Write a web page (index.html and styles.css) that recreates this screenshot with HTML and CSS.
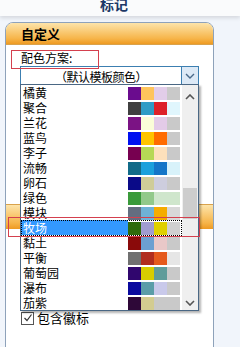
FILE: index.html
```html
<!DOCTYPE html>
<html lang="zh-CN">
<head>
    <meta charset="UTF-8">
    <title>标记</title>
    <link rel="stylesheet" href="styles.css">
</head>
<body>
    <div class="top">
        <h1 class="title">标记</h1>
    </div>

    <div class="panel">
        <div class="panelHead">自定义</div>
        <div class="panelBody">
            <div class="label">配色方案:</div>
            <div class="select">
                <span class="selectText">（默认模板颜色）</span>
                <span class="selectBtn">
                    <svg width="10" height="6" viewBox="0 0 10 6"><path d="M1 1 L5 5 L9 1" fill="none" stroke="#4a6a8a" stroke-width="1.4"/></svg>
                </span>
            </div>
            <div class="gap"></div>
            <div class="subHead"></div>
            <div class="gap2"></div>
            <label class="check">
                <span class="box">
                    <svg width="10" height="10" viewBox="0 0 10 10"><path d="M1.5 5 L4 7.5 L8.5 1.5" fill="none" stroke="#333" stroke-width="1.2"/></svg>
                </span>
                包含徽标
            </label>
        </div>

        <div class="mark markLabel"></div>

        <div class="dropList">
            <ul class="options" id="options"></ul>
            <div class="scroll">
                <svg class="arrowUp" width="10" height="6" viewBox="0 0 10 6"><path d="M1 5 L5 1 L9 5" fill="none" stroke="#555" stroke-width="1.6"/></svg>
                <div class="thumb"></div>
                <svg class="arrowDown" width="10" height="6" viewBox="0 0 10 6"><path d="M1 1 L5 5 L9 1" fill="none" stroke="#555" stroke-width="1.6"/></svg>
            </div>
        </div>

        <div class="mark markRow"></div>
    </div>

    <script>
        const schemes = [
            ['橘黄', ['#6a0c8e', '#fec45c', '#e2cde9', '#c9c9c9']],
            ['聚合', ['#404040', '#2f9cc6', '#dd2129', '#e0f6fd']],
            ['兰花', ['#7b1384', '#fbfdd8', '#e3cbe8', '#c9c9c9']],
            ['蓝鸟', ['#0010f0', '#ffc400', '#ff6c00', '#c9c9c9']],
            ['李子', ['#770050', '#b6d855', '#fde0bb', '#c9c9c9']],
            ['流畅', ['#116b88', '#1aa0dc', '#1475c8', '#d8f2fa']],
            ['卵石', ['#0a0a88', '#cfcc98', '#cdcdde', '#c9c9c9']],
            ['绿色', ['#3a9a3a', '#92c98a', '#cfe6cc', '#cfe6cc']],
            ['模块', ['#646d80', '#6fb2d6', '#f5ac00', '#d8d8d8']],
            ['牧场', ['#2f6b0c', '#a09cd0', '#dfd000', '#d0d0d0']],
            ['黏土', ['#8a0a0a', '#6c9fd1', '#e9c8c8', '#c9c9c9']],
            ['平衡', ['#707070', '#b12d1e', '#e55a1c', '#e6e6e6']],
            ['葡萄园', ['#30066e', '#d8cd00', '#5f9c9a', '#c9c9c9']],
            ['瀑布', ['#0a0a9e', '#5b9da8', '#c9c9ea', '#c9c9c9']],
            ['茄紫', ['#2e0838', '#d3cc90', '#c9c9c9', '#c9c9c9']]
        ];

        const list = document.getElementById('options');
        schemes.forEach(function (s) {
            const li = document.createElement('li');
            li.className = 'option' + (s[0] === '牧场' ? ' selected' : '');
            let html = '<span class="name">' + s[0] + '</span>';
            s[1].forEach(function (c) {
                html += '<span class="swatch" style="background:' + c + '"></span>';
            });
            li.innerHTML = html;
            list.appendChild(li);
        });
    </script>
</body>
</html>
```

FILE: styles.css
```css
body {
    margin: 0;
    width: 240px;
    height: 347px;
    overflow: hidden;
    background: #f1f5fb;
    font-family: "Noto Sans CJK SC", "Noto Sans", sans-serif;
    font-size: 12px;
    color: #000;
}

.top {
    height: 16px;
    background: #fafbfc;
    box-shadow: 0 2px 4px rgba(0, 0, 0, 0.12);
    overflow: hidden;
}

.title {
    margin: -5px 0 0 100px;
    font-size: 14px;
    font-weight: bold;
    color: #1c3866;
    line-height: 18px;
}

.panel {
    position: relative;
    margin: 6px 0 0 5px;
    width: 207px;
    height: 330px;
    background: #fff;
    border: 1px solid #8ea2ba;
    border-radius: 8px 8px 0 0;
}

.panelHead {
    height: 21px;
    padding-left: 15px;
    border-radius: 7px 7px 0 0;
    background: linear-gradient(#fde4aa, #f6b448 75%, #ee9a22);
    border-bottom: 1px solid #d9a24c;
    font-size: 13px;
    font-weight: bold;
    line-height: 22px;
}

.panelBody {
    padding: 6px 0 0 14px;
}

.label {
    line-height: 14px;
    height: 14px;
    margin-left: 1px;
}

.select {
    display: flex;
    margin-top: 1px;
    width: 177px;
    height: 18px;
    border: 1px solid #3c7fb1;
}

.selectText {
    flex: 1;
    text-align: center;
    line-height: 19px;
    letter-spacing: -0.5px;
}

.selectBtn {
    width: 16px;
    display: flex;
    align-items: center;
    justify-content: center;
    background: #dce9f6;
    border-left: 1px solid #3c7fb1;
}

.gap {
    height: 118px;
}

.subHead {
    margin-left: -14px;
    height: 24px;
    background: linear-gradient(#fde4aa, #f6b448 75%, #ee9a22);
    border-top: 1px solid #d9a24c;
}

.gap2 {
    height: 82px;
}

.check {
    display: flex;
    align-items: center;
    gap: 3px;
    font-size: 13px;
    line-height: 14px;
    margin-left: 1px;
}

.box {
    width: 11px;
    height: 11px;
    border: 1px solid #555;
    display: flex;
    align-items: center;
    justify-content: center;
}

.dropList {
    position: absolute;
    left: 14px;
    top: 61px;
    width: 177px;
    height: 225px;
    display: flex;
    background: #fff;
    border: 1px solid #4a6784;
    box-shadow: 2px 2px 2px rgba(0, 0, 0, 0.3);
}

.options {
    list-style: none;
    margin: 0;
    padding: 0;
    width: 160px;
}

.option {
    display: flex;
    height: 15px;
    align-items: flex-end;
    position: relative;
}

.name {
    width: 105px;
    height: 15px;
    padding-left: 2px;
    line-height: 15px;
    font-size: 12px;
}

.swatch {
    width: 13px;
    height: 13px;
}

.selected .name {
    background: #3399ff;
    color: #fff;
}

.selected::after {
    content: "";
    position: absolute;
    left: 0;
    top: 0;
    width: 159px;
    height: 14px;
    border: 1px dotted #000;
}

.scroll {
    position: relative;
    width: 16px;
    margin-left: 1px;
    background: #efefef;
}

.arrowUp {
    position: absolute;
    left: 3px;
    top: 9px;
}

.arrowDown {
    position: absolute;
    left: 3px;
    top: 215px;
}

.thumb {
    position: absolute;
    left: 1px;
    top: 103px;
    width: 14px;
    height: 31px;
    background: #cdcdcd;
}

.mark {
    position: absolute;
    border: 1px solid #d4404e;
}

.markLabel {
    left: 5px;
    top: 27px;
    width: 86px;
    height: 17px;
}

.markRow {
    left: 2px;
    top: 194px;
    width: 190px;
    height: 18px;
}
```
